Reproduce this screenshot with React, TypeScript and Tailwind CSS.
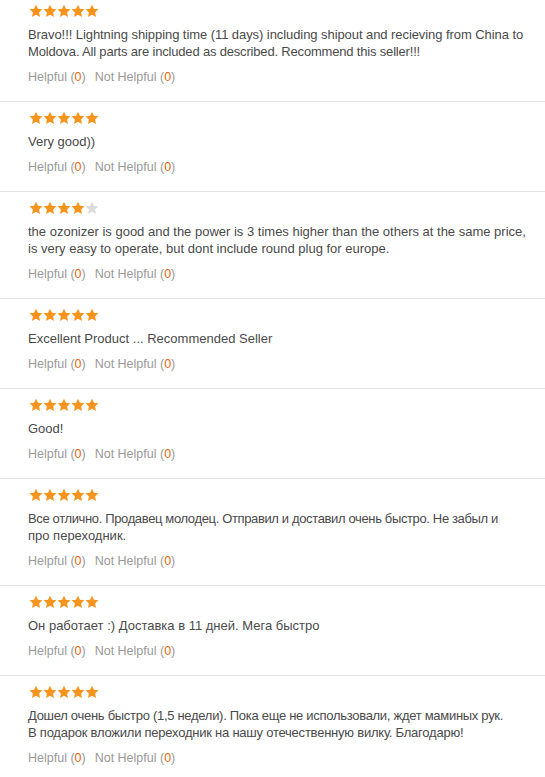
import React from "react";

type Line = { t: string; c: string };
type Review = { stars: number; lines: Line[] };

const reviews: Review[] = [
  {
    stars: 5,
    lines: [
      {
        t: "Bravo!!! Lightning shipping time (11 days) including shipout and recieving from China to",
        c: "tracking-[-0.07px]",
      },
      {
        t: "Moldova. All parts are included as described. Recommend this seller!!!",
        c: "tracking-[-0.18px]",
      },
    ],
  },
  { stars: 5, lines: [{ t: "Very good))", c: "" }] },
  {
    stars: 4,
    lines: [
      {
        t: "the ozonizer is good and the power is 3 times higher than the others at the same price,",
        c: "",
      },
      { t: "is very easy to operate, but dont include round plug for europe.", c: "" },
    ],
  },
  { stars: 5, lines: [{ t: "Excellent Product ... Recommended Seller", c: "" }] },
  { stars: 5, lines: [{ t: "Good!", c: "" }] },
  {
    stars: 5,
    lines: [
      {
        t: "Все отлично. Продавец молодец. Отправил и доставил очень быстро. Не забыл и",
        c: "tracking-[-0.36px]",
      },
      { t: "про переходник.", c: "" },
    ],
  },
  {
    stars: 5,
    lines: [{ t: "Он работает :) Доставка в 11 дней. Мега быстро", c: "" }],
  },
  {
    stars: 5,
    lines: [
      {
        t: "Дошел очень быстро (1,5 недели). Пока еще не использовали, ждет маминых рук.",
        c: "tracking-[-0.29px]",
      },
      {
        t: "В подарок вложили переходник на нашу отечественную вилку. Благодарю!",
        c: "tracking-[-0.23px]",
      },
    ],
  },
];

function Star({ filled }: { filled: boolean }) {
  return (
    <svg width="14" height="14" viewBox="0 0 24 24" className="block">
      <path
        d="M12 1.2l3.3 7.1 7.7.9-5.7 5.3 1.5 7.7L12 18.4l-6.8 3.8 1.5-7.7L1 9.2l7.7-.9z"
        fill={filled ? "#f7941d" : "#dcdcdc"}
      />
    </svg>
  );
}

export default function App() {
  return (
    <div
      className="w-[545px] bg-white"
      style={{ fontFamily: '"Liberation Sans", Arial, sans-serif' }}
    >
      {reviews.map((r, i) => (
        <div
          key={i}
          className={
            i === 0
              ? "pl-[28px] pt-[4px] pb-[15px]"
              : "border-t border-[#e3e3e3] pl-[28px] pt-[9px] pb-[15px]"
          }
        >
          <div className="flex pl-[1px]">
            {[0, 1, 2, 3, 4].map((s) => (
              <Star key={s} filled={s < r.stars} />
            ))}
          </div>
          <div className="mt-[8px] text-[13px] leading-[17px] text-[#4a4a4a]">
            {r.lines.map((l, j) => (
              <div key={j} className={"whitespace-nowrap " + l.c}>
                {l.t}
              </div>
            ))}
          </div>
          <div className="mt-[8px] text-[12.5px] leading-[18px] text-[#999] flex gap-[9px]">
            <span>
              Helpful (<span className="text-[#e8660c]">0</span>)
            </span>
            <span>
              Not Helpful (<span className="text-[#e8660c]">0</span>)
            </span>
          </div>
        </div>
      ))}
    </div>
  );
}
